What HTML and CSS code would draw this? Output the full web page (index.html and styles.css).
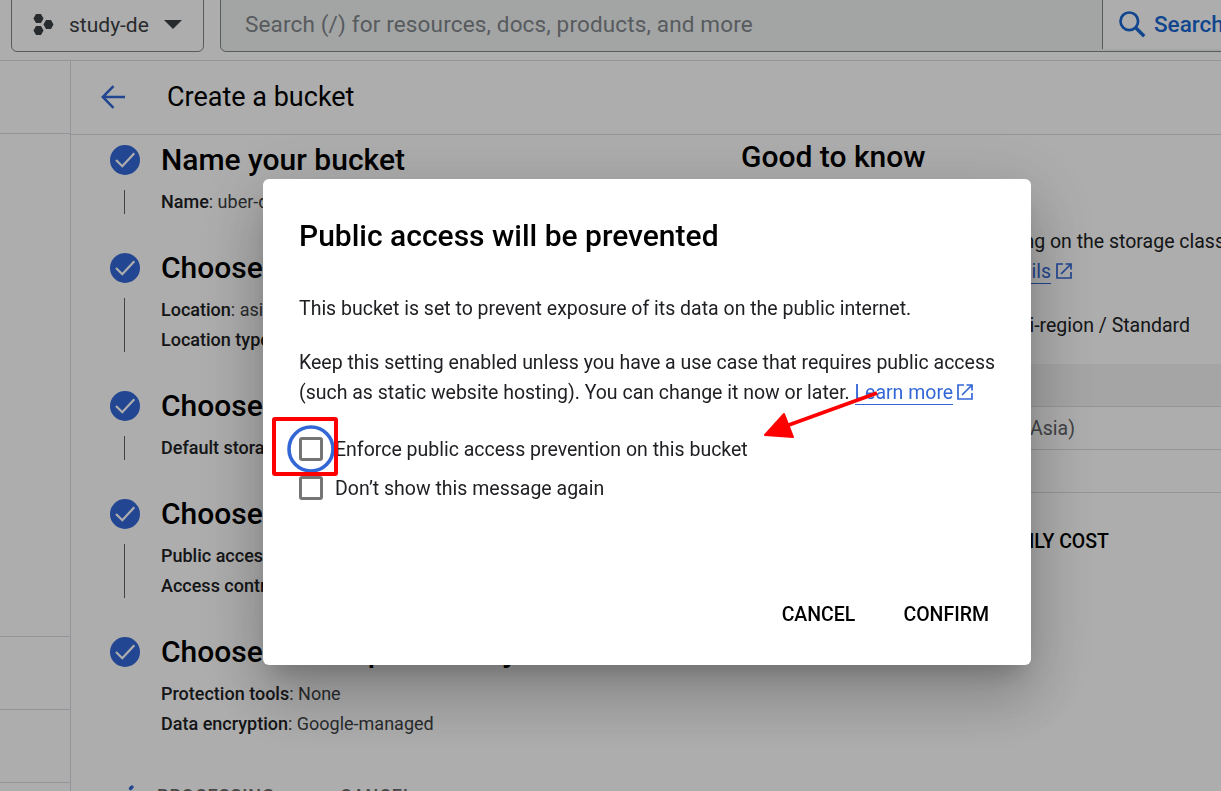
FILE: index.html
```html
<!DOCTYPE html>
<html lang="en">
<head>
<meta charset="utf-8">
<title>Create a bucket</title>
<link rel="stylesheet" href="styles.css">
</head>
<body>
<svg class="defs" width="0" height="0">
  <symbol id="check" viewBox="0 0 30 30"><circle cx="15" cy="15" r="15" fill="#3367d6"/><path d="M6 15l6.3 6.2L24.3 8.3" fill="none" stroke="#fff" stroke-width="2.3"/></symbol>
  <symbol id="external" viewBox="0 0 16 16"><path d="M7 1H1v14h14V9M9.5 1H15v5.5M15 1L5 11" fill="none" stroke="currentColor" stroke-width="1.7"/></symbol>
</svg>
<div class="app">
  <header class="topbar">
    <div class="project">
      <svg class="hexes" width="22" height="22" viewBox="0 0 22 22"><g fill="#3c4043"><path d="M3 0h5l2.5 4.5L8 9H3L.5 4.500z"/><path d="M13 6h5l2.500 4.500L18 15h-5l-2.500-4.500z"/><path d="M3 12h5l2.500 4.500L8 21H3L.5 16.500z"/></g></svg>
      <span>study-de</span>
      <svg width="18" height="9" viewBox="0 0 18 9"><path d="M0 0h18L9 9z" fill="#3c4043"/></svg>
    </div>
    <div class="search">
      <div class="search-field">Search (/) for resources, docs, products, and more</div>
      <div class="search-button">
        <svg width="27" height="27" viewBox="0 0 27 27"><circle cx="10.300" cy="10.300" r="8.800" fill="none" stroke="#1967d2" stroke-width="2.700"/><path d="M16.500 16.500l8.700 8.700" stroke="#1967d2" stroke-width="3.400"/></svg>
        <span>Search</span>
      </div>
    </div>
  </header>
  <div class="body">
    <nav class="rail"><div class="rail-head"></div><div class="rail-list"></div><div class="rail-item"></div><div class="rail-item"></div><div class="rail-foot"></div></nav>
    <main class="main">
      <div class="page-head">
        <svg width="24" height="24" viewBox="0 0 24 24"><path d="M24 12H2M12.500 1.200L1.800 12l10.700 10.800" fill="none" stroke="#3367d6" stroke-width="2.500"/></svg>
        <h1>Create a bucket</h1>
      </div>
      <div class="columns">
        <section class="steps">
          <div class="step"><svg class="tick"><use href="#check"/></svg><h2>Name your bucket</h2><i class="line"></i><div class="details"><p><b>Name</b>: uber-data-bucket</p></div></div>
          <div class="step"><svg class="tick"><use href="#check"/></svg><h2>Choose where to store your data</h2><i class="line"></i><div class="details"><p><b>Location</b>: asia</p><p><b>Location type</b>: Multi-region</p></div></div>
          <div class="step"><svg class="tick"><use href="#check"/></svg><h2>Choose a storage class</h2><i class="line"></i><div class="details"><p><b>Default storage class</b>: Standard</p></div></div>
          <div class="step"><svg class="tick"><use href="#check"/></svg><h2>Choose how to control access</h2><i class="line"></i><div class="details"><p><b>Public access prevention</b>: On</p><p><b>Access control</b>: Uniform</p></div></div>
          <div class="step"><svg class="tick"><use href="#check"/></svg><h2>Choose how to protect object data</h2><i></i><div class="details"><p><b>Protection tools</b>: None</p><p><b>Data encryption</b>: Google-managed</p></div></div>
          <div class="actions"><svg width="12" height="8" viewBox="0 0 12 8"><path d="M4.500 4.500l1.500-1.500" stroke="#3367d6" stroke-width="3.400" fill="none" stroke-linecap="round"/></svg><span class="processing">PROCESSING</span><span>CANCEL</span></div>
        </section>
        <aside class="info">
          <h2>Good to know</h2>
          <p class="cost">depending on the storage class</p>
          <p class="pricing"><a>Pricing details</a><svg width="16" height="16"><use href="#external"/></svg></p>
          <p class="config">Multi-region / Standard</p>
          <div class="table"><div class="row row-head"></div><div class="row"><span>(multiple regions in Asia)</span></div><div class="row row-last"></div></div>
          <p class="estimate">ESTIMATE YOUR MONTHLY COST</p>
        </aside>
      </div>
    </main>
  </div>
</div>
<div class="scrim"></div>
<div class="dialog" role="dialog">
  <h2>Public access will be prevented</h2>
  <p class="lead">This bucket is set to prevent exposure of its data on the public internet.</p>
  <p class="copy">Keep this setting enabled unless you have a use case that requires public access<br>(such as static website hosting). You can change it now or later. <a>Learn more</a><svg width="16" height="16"><use href="#external"/></svg></p>
  <div class="option"><span class="box"></span><span class="label">Enforce public access prevention on this bucket</span></div>
  <div class="option"><span class="box"></span><span class="label">Don’t show this message again</span></div>
  <div class="buttons"><span>CANCEL</span><span>CONFIRM</span></div>
</div>
<svg class="marks" width="1221" height="791" viewBox="0 0 1221 791">
  <circle cx="311" cy="449" r="22" fill="none" stroke="#3367d6" stroke-width="3.600"/>
  <rect x="274" y="419" width="62" height="55" rx="1" fill="none" stroke="red" stroke-width="4"/>
  <path d="M877 393L786 426" stroke="red" stroke-width="3.800"/>
  <path d="M765 435L784 414L793 437z" fill="red" stroke="red" stroke-width="2" stroke-linejoin="round"/>
</svg>
</body>
</html>
```

FILE: styles.css
```css
* { box-sizing: border-box; }
html, body { margin: 0; height: 791px; overflow: hidden; }
body { font-family: Roboto, "Liberation Sans", sans-serif; font-size: 19.5px; color: #202124; background: #fff; }
h1, h2, p { margin: 0; }
.defs { position: absolute; }
.app { width: 1221px; height: 791px; overflow: hidden; display: flex; flex-direction: column; }
.topbar { height: 61px; flex: none; display: flex; gap: 16px; padding-left: 11px; border-bottom: 1px solid #dadce0; overflow: hidden; }
.project { width: 193px; height: 58px; margin-top: -6px; flex: none; border: 1px solid #80868b; border-radius: 6px; display: flex; align-items: center; padding: 3px 0 0 21px; font-size: 21px; color: #3c4043; }
.project span { margin: 0 15px 0 14px; }
.search { width: 1020px; height: 58px; margin-top: -6px; flex: none; border: 1px solid #80868b; border-radius: 6px; background: #f1f3f4; display: flex; }
.search-field { width: 881px; padding: 17px 0 0 24px; font-size: 22.5px; line-height: 24px; color: #80868b; letter-spacing: .15px; }
.search-button { flex: 1; height: 54px; border-left: 1px solid #80868b; background: #fff; display: flex; gap: 8px; padding: 16px 0 0 16px; font-weight: 500; font-size: 22.5px; line-height: 27px; color: #1967d2; }
.body { flex: 1; display: flex; min-height: 0; }
.rail { width: 71px; flex: none; border-right: 1px solid #dadce0; display: flex; flex-direction: column; }
.rail-head, .rail-item { height: 73px; border-bottom: 1px solid #dadce0; flex: none; }
.rail-list { height: 503px; border-bottom: 1px solid #dadce0; flex: none; }
.rail-foot { flex: 1; }
.main { flex: 1; min-width: 0; }
.page-head { height: 74px; border-bottom: 1px solid #dadce0; display: flex; align-items: center; gap: 42px; padding: 0 0 2px 30px; }
h1 { font-size: 27px; font-weight: 400; color: #000; line-height: 36px; }
.columns { display: flex; height: 656px; overflow: hidden; }
.steps { width: 670px; flex: none; padding: 10px 0 0 39px; }
.step { display: grid; grid-template-columns: 30px 1fr; column-gap: 21px; grid-template-rows: 30px auto; row-gap: 12px; padding-bottom: 36px; }
.tick { width: 30px; height: 30px; }
.step h2, .info h2, .dialog h2 { font-size: 30px; font-weight: 500; line-height: 30px; color: #000; white-space: nowrap; }
.line { width: 1px; background: #5f6368; margin: 3px 0 3px 14px; }
.details { font-size: 18px; line-height: 30px; color: #3c4043; }
.details b { font-weight: 500; color: #202124; }
.actions { display: flex; margin-top: 9px; padding-left: 16px; height: 30px; line-height: 24px; font-size: 18px; font-weight: 500; color: #6b6767; letter-spacing: .9px; }
.processing { width: 183px; margin-left: 19px; }
.info { width: 480px; flex: none; padding-top: 7px; }
.info p { text-align: right; line-height: 30px; white-space: nowrap; }
.cost { width: 484px; margin-top: 55px !important; }
.pricing { width: 331px; }
.pricing svg { margin-left: 5px; vertical-align: -1px; color: #3367d6; }
a { color: #3367d6; border-bottom: 1px solid #3367d6; }
.config { width: 449px; margin-top: 24px !important; }
.table { margin-top: 23px; }
.row { height: 43px; border-bottom: 1px solid #dadce0; }
.row-head { background: #f3f3f3; }
.row span { display: block; width: 334px; text-align: right; line-height: 44px; color: #5f6368; }
.estimate { width: 368px; margin-top: 34px !important; font-weight: 500; color: #000; }
.scrim { position: fixed; inset: 0; background: rgba(0,0,0,.32); }
.dialog { position: fixed; left: 263px; top: 179px; width: 768px; height: 486px; padding: 39px 36px 0; background: #fff; border-radius: 6px; display: flex; flex-direction: column; box-shadow: 0 16px 22px -10px rgba(0,0,0,.2), 0 36px 57px 4px rgba(0,0,0,.14), 0 13px 69px 12px rgba(0,0,0,.12); }
.dialog h2 { line-height: 36px; }
.lead { margin-top: 40px; line-height: 30px; }
.copy { margin-top: 24px; line-height: 30px; white-space: nowrap; letter-spacing: -.005px; }
.copy svg { margin-left: 4px; vertical-align: -1px; color: #3367d6; }
.option { display: flex; align-items: center; gap: 12px; height: 39px; flex: none; }
.copy + .option { margin-top: 21px; }
.label { padding-top: 1px; }
.box { width: 24px; height: 24px; border: 3px solid #757575; border-radius: 3px; }
.buttons { margin-top: 93px; padding-right: 6px; display: flex; justify-content: flex-end; gap: 48px; line-height: 30px; font-weight: 500; color: #000; }
.marks { position: fixed; left: 0; top: 0; pointer-events: none; }
```
